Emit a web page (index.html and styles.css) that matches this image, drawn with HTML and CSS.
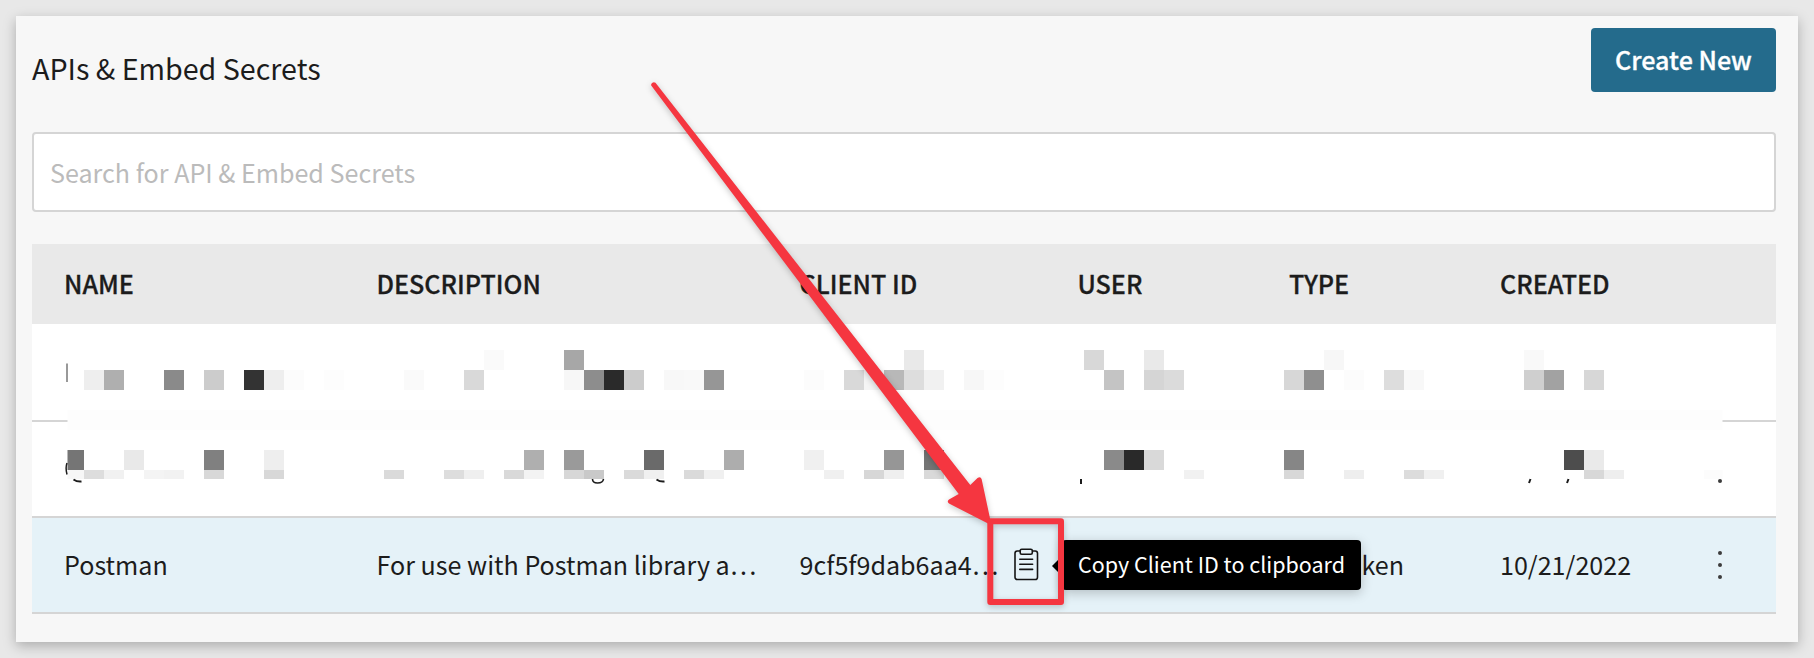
FILE: index.html
```html
<!DOCTYPE html>
<html lang="en">
<head>
<meta charset="utf-8">
<title>APIs &amp; Embed Secrets</title>
<link rel="stylesheet" href="styles.css">
</head>
<body>
<main class="card">
  <header class="card-head">
    <h1 class="title">APIs &amp; Embed Secrets</h1>
    <button class="create" type="button">Create New</button>
  </header>
  <input class="search" type="text" placeholder="Search for API &amp; Embed Secrets">
  <div class="table">
    <div class="row head"><span>NAME</span><span>DESCRIPTION</span><span>CLIENT ID</span><span>USER</span><span>TYPE</span><span>CREATED</span><span></span></div>
    <div class="row first"></div>
    <div class="row"></div>
    <div class="row selected">
      <span>Postman</span>
      <span>For use with Postman library a…</span>
      <div class="client">
        <span class="client-id">9cf5f9dab6aa4…</span>
        <svg class="clip" viewBox="0 0 26 34" width="26" height="34"><path d="M6.500 3H4.300a2.300 2.300 0 0 0-2.300 2.300v23.900a2.300 2.300 0 0 0 2.300 2.300h17.900a2.300 2.300 0 0 0 2.300-2.300V5.300A2.300 2.300 0 0 0 22.200 3H20M8.700 1.200h9.100a1.500 1.500 0 0 1 1.500 1.500v2.100a1.500 1.500 0 0 1-1.500 1.500H8.700a1.500 1.500 0 0 1-1.500-1.500V2.700a1.500 1.500 0 0 1 1.500-1.500zM6.800 11.200h12.800M6.800 16.300h12.800M6.800 21.400h12.800"/></svg>
      </div>
      <span></span>
      <span class="type">API Token</span>
      <span>10/21/2022</span>
      <div class="more"><i></i><i></i><i></i></div>
    </div>
  </div>
</main>
<svg class="layer" id="mosaic" width="1814" height="658" viewBox="0 0 1814 658"></svg>
<div class="tooltip">Copy Client ID to clipboard</div>
<svg class="layer mark" width="1814" height="658" viewBox="0 0 1814 658">
  <path class="arrow" d="M655.500 82.800L970.300 485L977.500 478Q980.500 476 981.600 479L991 523Q990 524 988 523.500L949 503.500Q946.500 501.500 949 499.500L958.700 494L651.200 85.500A2.700 2.700 0 0 1 655.500 82.800Z"/>
  <rect class="box" x="990.300" y="521.300" width="70.700" height="80.700"/>
</svg>
<script src="mosaic.js"></script>
</body>
</html>
```
FILE: styles.css
```css
* { box-sizing: border-box; }
body {
  margin: 0;
  height: 658px;
  padding: 16px;
  overflow: hidden;
  background: #e8e8e8;
  color: #1c1c1c;
  font-family: "Noto Sans CJK SC", "Noto Sans", sans-serif;
  font-size: 25.100px;
}
.card {
  width: 1782px;
  height: 626px;
  padding: 12px 22px 0 16px;
  background: #f7f7f7;
  box-shadow: 0 4px 12px rgba(0, 0, 0, .26);
}
.card-head { display: flex; justify-content: space-between; height: 104px; }
.title { margin: 0; padding-top: 12px; font-size: 28.650px; font-weight: 400; line-height: 56px; }
.create {
  width: 185px;
  height: 64px;
  border: 0;
  border-radius: 4px;
  padding: 0 0 2px;
  background: #246b8c;
  color: #fff;
  font: inherit;
  font-weight: 500;
  -webkit-text-stroke: .3px #fff;
}
.search {
  display: block;
  width: 100%;
  height: 80px;
  margin-bottom: 32px;
  padding: 0 16px 1px;
  border: 2px solid #d5d5d5;
  border-radius: 4px;
  background: #fff;
  font: inherit;
}
.search::placeholder { color: #bbb; opacity: 1; }
.row {
  display: grid;
  grid-template-columns: 312.500px 423px 278px 211.500px 211px 210px 40px;
  align-items: center;
  height: 96px;
  padding-left: 32px;
  border-bottom: 2px solid #d5d5d5;
  background: #fff;
  white-space: nowrap;
}
.row > span, .client-id { padding-bottom: 3px; }
.row.head { height: 80px; border: 0; background: #e9e9e9; font-weight: 500; -webkit-text-stroke: .3px #1c1c1c; }
.row.first { height: 98px; }
.row.selected { background: #e5f2f8; }
.client { display: flex; align-items: center; gap: 16px; }
.client-id { width: 197.500px; }
.clip { flex: none; fill: none; stroke: #141414; stroke-width: 1.600; stroke-linecap: round; }
.more { display: flex; flex-direction: column; align-items: center; gap: 8px; width: 20px; }
.more i { width: 4px; height: 4px; border-radius: 50%; background: #3c3c3c; }
.layer { position: absolute; left: 0; top: 0; pointer-events: none; }
.tooltip {
  position: absolute;
  left: 1062px;
  top: 540px;
  width: 299px;
  height: 50px;
  padding-left: 16px;
  border-radius: 4px;
  background: #000;
  color: #fff;
  font-size: 21.500px;
  line-height: 48px;
  white-space: nowrap;
  box-shadow: 0 3px 12px rgba(0, 0, 0, .22);
}
.tooltip::before {
  content: "";
  position: absolute;
  left: -10px;
  top: 16px;
  border: 10px solid transparent;
  border-left: 0;
  border-right-color: #000;
}
.mark { filter: drop-shadow(0 2px 3px rgba(0, 0, 0, .22)); }
.arrow { fill: #f53640; }
.box { fill: none; stroke: #f53640; stroke-width: 6; stroke-linejoin: round; }
.ink { fill: none; stroke: #1c1c1c; stroke-width: 2; }
```
FILE: mosaic.js
```js
// Pixelated blocks: each band lists "x:grey" pairs on a 20px grid.
const bands = [
  [350, 20, "484:fa 564:a7 904:e9 1084:d8 1144:e9 1324:f7 1524:f9"],
  [370, 20, "84:ee 104:af 164:8a 204:cc 244:33 264:ee 284:fc 324:fd 404:fa 464:d9 564:f7 584:8d 604:2a 624:cc 664:f8 684:f9 704:96 804:fc 844:d9 864:f5 884:b8 904:dd 924:f1 964:f7 984:fd 1104:c4 1144:d5 1164:db 1284:d7 1304:8f 1344:fc 1384:dd 1404:f8 1524:cf 1544:a2 1584:d7"],
  [450, 20, "64:75 124:e9 204:80 264:ee 524:af 564:9a 644:6a 724:ad 804:f0 884:96 924:75 1104:8a 1124:29 1144:d9 1284:86 1564:4d 1584:ea"],
  [470, 9, "64:f7 84:dd 104:f1 144:f4 164:f2 204:d8 264:d8 384:da 444:dd 464:ef 504:d9 524:f3 564:d7 584:c9 624:da 644:f0 684:da 704:f0 824:f0 864:d7 884:ef 924:d9 1184:f1 1284:d8 1344:ee 1404:dc 1424:f0 1584:d8 1604:ee 1704:fc"]
];
let out = '<rect x="67.500" y="410" width="1655" height="20" fill="#fdfdfd"/>';
for (const [y, h, list] of bands) {
  for (const item of list.split(" ")) {
    const [gx, g] = item.split(":");
    const x = Math.max(67.5, +gx);
    const w = Math.min(1722.5, +gx + 20) - x;
    out += `<rect x="${x}" y="${y}" width="${w}" height="${h}" fill="#${g}${g}${g}"/>`;
  }
}
// Slivers of text left outside the pixelated area.
out += '<g class="ink"><path d="M67 363.500V382" stroke="#999"/><path d="M67 463Q65.200 468 67 474.500" stroke-width="1.500"/>' +
  '<path d="M73.500 479.500Q77 482 81.500 481.500"/><path d="M592.500 479Q592.500 483 597.500 483Q603 483 603.500 479" stroke-width="1.600"/>' +
  '<path d="M656.500 479.500Q660 482 664.500 481.500"/><path d="M1081 479V484"/>' +
  '<path d="M1530.500 479L1529 483M1568.500 479L1567 483"/></g><circle cx="1720" cy="481" r="2" fill="#3c3c3c"/>';
document.getElementById("mosaic").innerHTML = out;
```
